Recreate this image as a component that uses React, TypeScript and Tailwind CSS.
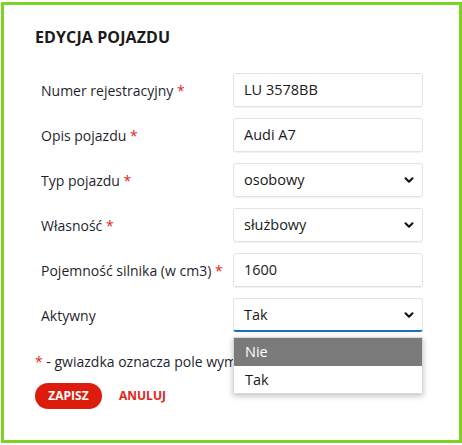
import { ChevronDown } from "lucide-react";

const font = { fontFamily: '"Open Sans", "Noto Sans", sans-serif' };

function Req() {
  return <span className="text-[#e3241b]"> *</span>;
}

function Row({ label, required, children }: { label: string; required?: boolean; children: React.ReactNode }) {
  return (
    <div className="flex h-[34px] items-center">
      <div className="w-[198px] whitespace-nowrap pl-[6px] text-[14px] text-[#1f1f2e]">
        {label}
        {required && <Req />}
      </div>
      {children}
    </div>
  );
}

function TextBox({ value }: { value: string }) {
  return (
    <div className="flex h-[34px] w-[190px] items-center rounded-[3px] border border-[#e2e2e2] px-[10px] text-[14.5px] text-[#1a1a1a] shadow-[0_1px_1px_rgba(0,0,0,0.06)]">
      {value}
    </div>
  );
}

function SelectBox({ value, focused }: { value: string; focused?: boolean }) {
  return (
    <div
      className={
        "flex h-[34px] w-[190px] items-center justify-between rounded-[3px] border border-[#e2e2e2] pl-[10px] pr-[6px] text-[14.5px] text-[#1a1a1a] " +
        (focused ? "border-b-2 border-b-[#1f6fb8]" : "shadow-[0_1px_1px_rgba(0,0,0,0.06)]")
      }
    >
      <span>{value}</span>
      <ChevronDown className="h-[14px] w-[14px] text-[#111]" strokeWidth={3.5} />
    </div>
  );
}

export default function App() {
  return (
    <div className="pl-[1px] pt-[2px]" style={font}>
      <div className="relative h-[441px] w-[461px] border-[3px] border-[#7ed321] bg-white px-[31px] pt-[21px]">
        <h2 className="text-[16px] font-bold leading-[22px] tracking-[0.1px] text-[#1b1b1b]">EDYCJA POJAZDU</h2>
        <div className="mt-[25px] flex flex-col gap-[11px]">
          <Row label="Numer rejestracyjny" required>
            <TextBox value="LU 3578BB" />
          </Row>
          <Row label="Opis pojazdu" required>
            <TextBox value="Audi A7" />
          </Row>
          <Row label="Typ pojazdu" required>
            <SelectBox value="osobowy" />
          </Row>
          <Row label="Własność" required>
            <SelectBox value="służbowy" />
          </Row>
          <Row label="Pojemność silnika (w cm3)" required>
            <TextBox value="1600" />
          </Row>
          <Row label="Aktywny">
            <SelectBox value="Tak" focused />
          </Row>
        </div>
        <p className="mt-[19px] whitespace-nowrap text-[14px] text-[#1f1f2e]">
          <span className="text-[#e3241b]">*</span> - gwiazdka oznacza pole wymagane
        </p>
        <div className="mt-[11px] flex items-center gap-[17px]">
          <button className="h-[26px] w-[67px] rounded-full bg-[#dc1c0c] text-[12px] font-bold text-white">ZAPISZ</button>
          <button className="text-[12px] font-bold text-[#e3241b]">ANULUJ</button>
        </div>

        <div className="absolute left-[229px] top-[332px] w-[190px] border border-[#d8d8d8] bg-white text-[14.5px] shadow-[0_2px_6px_rgba(0,0,0,0.25)]">
          <div className="flex h-[28px] items-center bg-[#7a7a7a] px-[11px] text-white">Nie</div>
          <div className="flex h-[27px] items-center px-[11px] text-[#1a1a1a]">Tak</div>
        </div>
      </div>
    </div>
  );
}
